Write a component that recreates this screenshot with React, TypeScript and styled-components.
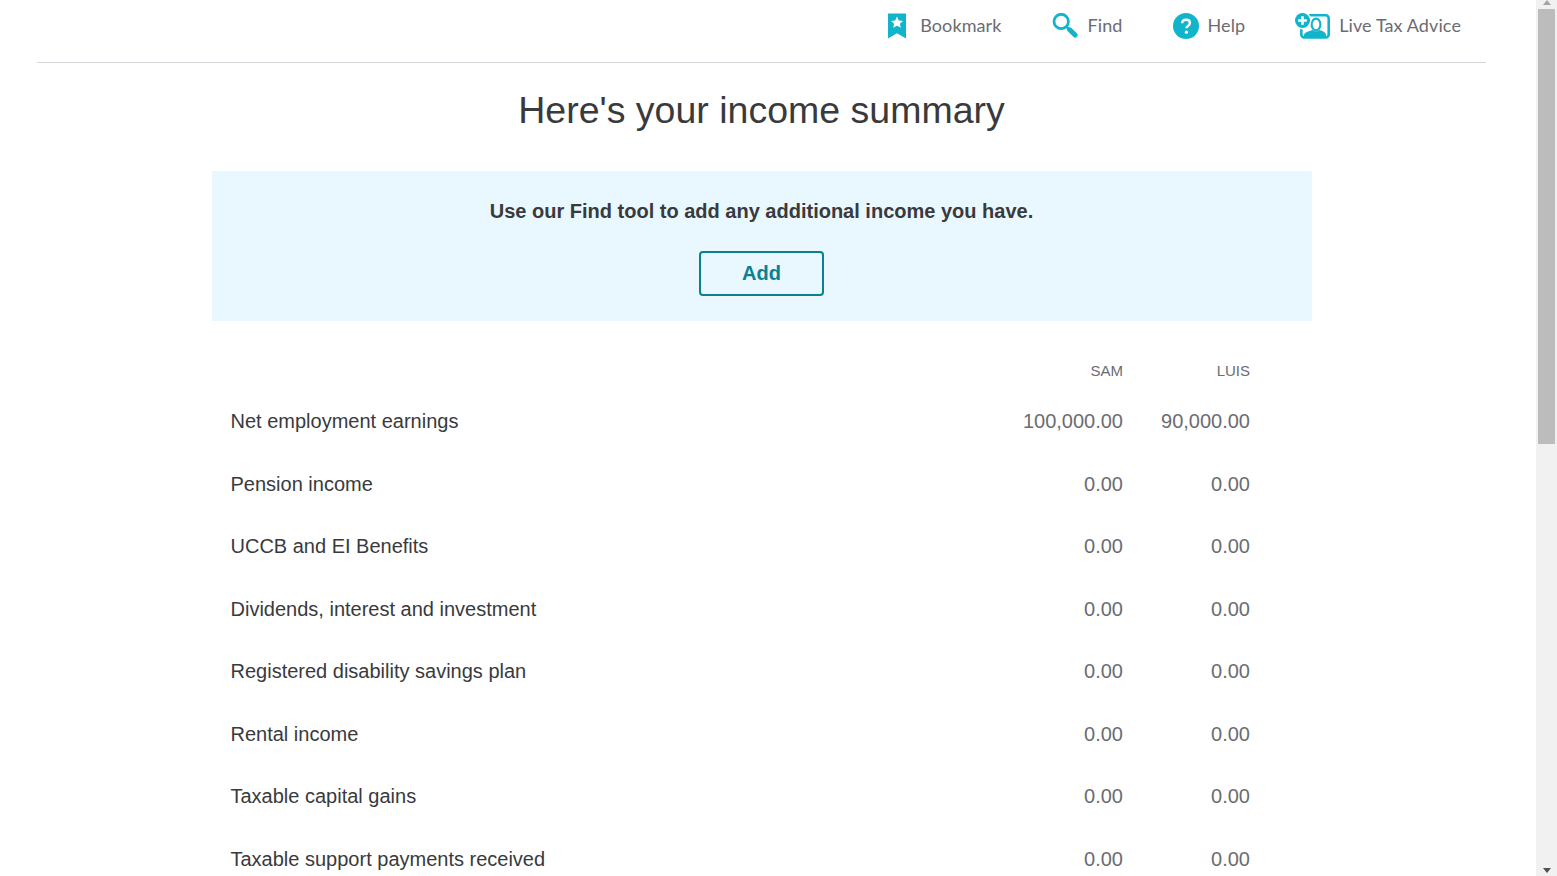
import React from 'react';
import styled, { createGlobalStyle } from 'styled-components';

const GlobalStyle = createGlobalStyle`
  html, body {
    margin: 0;
    height: 100%;
    overflow: hidden;
    background: #fff;
  }
  body {
    font-family: 'Liberation Sans', Arial, sans-serif;
    color: #393a3d;
  }
`;

const Page = styled.div`
  display: flex;
  width: 1557px;
  height: 876px;
  overflow: hidden;
`;

const Main = styled.main`
  width: 1536px;
  flex: none;
  height: 876px;
  overflow: hidden;
  box-sizing: border-box;
  padding: 0 50px 0 37px;
`;

const TopBar = styled.header`
  display: flex;
  justify-content: flex-end;
  align-items: center;
  height: 51px;
  border-bottom: 1px solid #d4d7dc;
  padding: 0 25px 11px 0;
  gap: 50px;
`;

const NavItem = styled.a<{ $gap: number }>`
  display: flex;
  align-items: center;
  gap: ${(props) => props.$gap}px;
  font-family: Lato, 'Open Sans', sans-serif;
  font-size: 18px;
  letter-spacing: 0.1px;
  color: #6b6c72;
  text-decoration: none;
  cursor: pointer;
`;

const NavLabel = styled.span`
  margin-bottom: 2px;
`;

const Title = styled.h1`
  margin: 22px 0 0;
  height: 86px;
  font-size: 37.5px;
  line-height: 50px;
  font-weight: 400;
  text-align: center;
  color: #393a3d;
`;

const Banner = styled.section`
  width: 1100px;
  height: 150px;
  margin: 0 auto;
  background: #e9f8fe;
  display: flex;
  flex-direction: column;
  align-items: center;
  box-sizing: border-box;
  padding-top: 29px;
`;

const BannerText = styled.p`
  margin: 0;
  font-size: 20px;
  line-height: 23px;
  font-weight: 700;
`;

const AddButton = styled.button`
  margin-top: 28px;
  width: 125px;
  height: 45px;
  border: 2px solid #0d8090;
  border-radius: 4px;
  background: transparent;
  color: #0d8090;
  font-family: inherit;
  font-size: 20px;
  font-weight: 700;
  cursor: pointer;
`;

const Table = styled.div`
  width: 1100px;
  margin: 0 auto;
  padding: 0 61.5px 0 19px;
  box-sizing: border-box;
`;

const HeadRow = styled.div`
  display: grid;
  grid-template-columns: 1fr 127px 127px;
  margin-top: 39px;
  height: 20px;
  align-items: center;
  text-align: right;
  font-size: 15px;
  color: #6b6c72;
`;

const Row = styled.div`
  display: grid;
  grid-template-columns: 1fr 127px 127px;
  height: 62.5px;
  align-items: center;
  font-size: 20px;
`;

const Rows = styled.div`
  padding-top: 10.4px;
`;

const Label = styled.span`
  color: #393a3d;
`;

const Amount = styled.span`
  text-align: right;
  color: #6b6c72;
`;

const Scrollbar = styled.div`
  width: 21px;
  height: 876px;
  flex: none;
  background: #f1f1f1;
  display: flex;
  flex-direction: column;
  align-items: center;
  position: relative;
`;

const ScrollArrow = styled.div<{ $up?: boolean }>`
  position: absolute;
  ${(props) => (props.$up ? 'top: 0;' : 'bottom: 3px;')}
  width: 0;
  height: 0;
  border-left: 4.5px solid transparent;
  border-right: 4.5px solid transparent;
  ${(props) => (props.$up ? 'border-bottom: 5px solid #a3a3a3;' : 'border-top: 5px solid #505050;')}
`;

const ScrollThumb = styled.div`
  margin-top: 9px;
  width: 17px;
  height: 435px;
  background: #bcbcbc;
`;

const TEAL = '#10b5cb';

const BookmarkIcon = () => (
  <svg width="18" height="26" viewBox="0 0 18 26">
    <path d="M0 0.5h18v25l-9-5.2-9 5.2z" fill={TEAL} />
    <path
      d="M9 3.6l1.8 3.8 4.2.5-3.1 2.8.9 4.1L9 12.7l-3.8 2.1.9-4.1L3 7.9l4.2-.5z"
      fill="#fff"
    />
  </svg>
);

const FindIcon = () => (
  <svg width="26" height="26" viewBox="0 0 26 26">
    <circle cx="9.2" cy="8.5" r="7.2" fill="none" stroke={TEAL} strokeWidth="2.8" />
    <path d="M14.2 13.5l3.5 3.2" stroke={TEAL} strokeWidth="2.6" />
    <path d="M17.7 16.8l5.4 5.2" stroke={TEAL} strokeWidth="5" strokeLinecap="round" />
  </svg>
);

const HelpIcon = () => (
  <svg width="26" height="26" viewBox="0 0 26 26">
    <circle cx="13" cy="13" r="13" fill={TEAL} />
    <path
      d="M9.2 10.2c0-2.2 1.7-3.5 3.9-3.5s3.8 1.3 3.8 3.2c0 1.5-.9 2.3-2 3-1 .7-1.5 1.2-1.5 2.4"
      fill="none"
      stroke="#fff"
      strokeWidth="2.4"
    />
    <circle cx="13.4" cy="19.2" r="1.6" fill="#fff" />
  </svg>
);

const LiveAdviceIcon = () => (
  <svg width="35" height="26" viewBox="0 0 35 26">
    <rect x="6.3" y="2.3" width="27.4" height="22.2" rx="3" fill="#fff" stroke={TEAL} strokeWidth="2.6" />
    <path
      d="M9 25v-3.2c.6-2.6 4.6-3.4 8.4-4.8l2.2 1.2h2.8l2.2-1.2c3 1.2 5.8 2 6.4 4.8V25z"
      fill={TEAL}
    />
    <ellipse cx="21" cy="11.5" rx="4.4" ry="5.8" fill="#fff" stroke={TEAL} strokeWidth="2.2" />
    <circle cx="7.5" cy="7.5" r="9" fill="#fff" />
    <circle cx="7.5" cy="7.5" r="7.5" fill={TEAL} />
    <path d="M7.5 3.2v8.6M3.2 7.5h8.6" stroke="#fff" strokeWidth="2.6" />
  </svg>
);

const rows: [string, string, string][] = [
  ['Net employment earnings', '100,000.00', '90,000.00'],
  ['Pension income', '0.00', '0.00'],
  ['UCCB and EI Benefits', '0.00', '0.00'],
  ['Dividends, interest and investment', '0.00', '0.00'],
  ['Registered disability savings plan', '0.00', '0.00'],
  ['Rental income', '0.00', '0.00'],
  ['Taxable capital gains', '0.00', '0.00'],
  ['Taxable support payments received', '0.00', '0.00'],
];

export default function App() {
  return (
    <Page>
      <GlobalStyle />
      <Main>
        <TopBar>
          <NavItem $gap={14}>
            <BookmarkIcon />
            <NavLabel>Bookmark</NavLabel>
          </NavItem>
          <NavItem $gap={10}>
            <FindIcon />
            <NavLabel>Find</NavLabel>
          </NavItem>
          <NavItem $gap={9}>
            <HelpIcon />
            <NavLabel>Help</NavLabel>
          </NavItem>
          <NavItem $gap={9}>
            <LiveAdviceIcon />
            <NavLabel>Live Tax Advice</NavLabel>
          </NavItem>
        </TopBar>
        <Title>Here's your income summary</Title>
        <Banner>
          <BannerText>Use our Find tool to add any additional income you have.</BannerText>
          <AddButton>Add</AddButton>
        </Banner>
        <Table>
          <HeadRow>
            <span />
            <span>SAM</span>
            <span>LUIS</span>
          </HeadRow>
          <Rows>
            {rows.map(([label, sam, luis]) => (
              <Row key={label}>
                <Label>{label}</Label>
                <Amount>{sam}</Amount>
                <Amount>{luis}</Amount>
              </Row>
            ))}
          </Rows>
        </Table>
      </Main>
      <Scrollbar>
        <ScrollArrow $up />
        <ScrollThumb />
        <ScrollArrow />
      </Scrollbar>
    </Page>
  );
}
